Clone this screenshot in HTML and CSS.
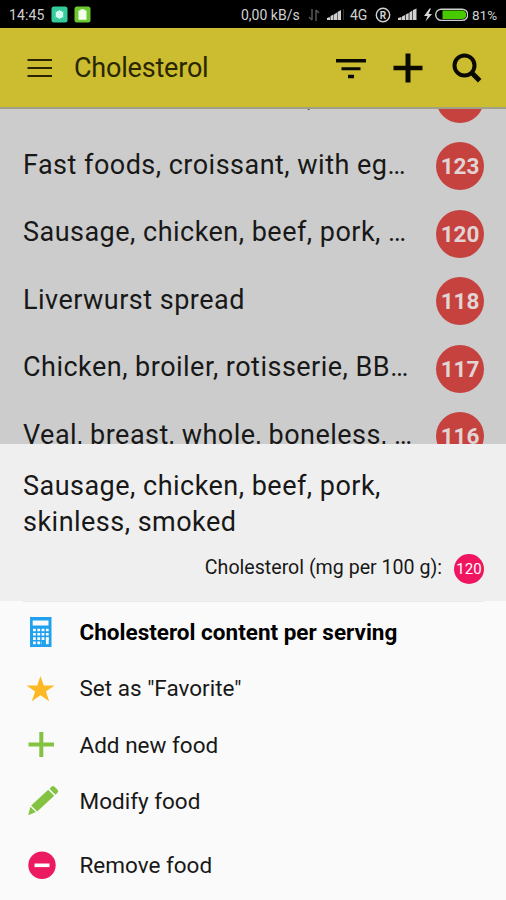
FILE: index.html
```html
<!DOCTYPE html>
<html lang="en">
<head>
    <meta charset="UTF-8">
    <meta name="viewport" content="width=device-width, initial-scale=1.0">
    <title>Cholesterol</title>
    <link rel="stylesheet" href="styles.css">
</head>
<body>

    <!-- Status bar -->
    <div class="status-bar">
        <span class="clock">14:45</span>
        <svg class="app-icon" width="17" height="17" viewBox="0 0 17 17">
            <rect x="0.5" y="0.5" width="16" height="16" rx="2.5" fill="#35cb9b"/>
            <circle cx="8.5" cy="8.5" r="3.8" fill="#d9fff2"/>
            <path d="M4.500 6l8 5M4.500 11l8-5M8.500 4v9" stroke="#c9f9e8" stroke-width="1"/>
        </svg>
        <svg class="app-icon" width="17" height="17" viewBox="0 0 17 17">
            <rect x="0.5" y="0.5" width="16" height="16" rx="2.5" fill="#6cc832"/>
            <path d="M4.500 4.500h2v-1.200h4v1.200h2v9.200h-8z" fill="#f4ffe9"/>
        </svg>
        <div class="status-right">
            <span class="speed">0,00 kB/s</span>
            <svg width="12" height="14" viewBox="0 0 12 14" fill="none" stroke="#555" stroke-width="1.5">
                <path d="M4 1v11M4 12L1 9M8 13V2M8 2l3 3"/>
            </svg>
            <svg class="signal" width="18" height="13" viewBox="0 0 18 13" fill="#d0d0d0">
                <path d="M0 12v-2l3-1v3zM3.500 12V8l3-1.500v5.500zM7 12V6.500l3-2v7.500zM10.500 12V4l3.500-2v10z"/>
                <path d="M16 12V1h1v11z" fill="#333"/>
            </svg>
            <span class="net">4G</span>
            <svg class="roaming" width="16" height="16" viewBox="0 0 16 16">
                <circle cx="8" cy="8" r="6.7" fill="none" stroke="#d0d0d0" stroke-width="1.4"/>
                <text x="8" y="11.5" text-anchor="middle" class="roaming-text">R</text>
            </svg>
            <svg class="signal-full" width="19" height="13" viewBox="0 0 19 13" fill="#d0d0d0">
                <path d="M0 12v-2l3.500-1v3zM4 12V8.500l3-1.500v5zM7.700 12V6.500l3-1.500v7zM11.400 12V4.500l3-2v9.500zM15 12V2l3.500-1.500V12z"/>
            </svg>
            <svg class="battery" width="44" height="14" viewBox="0 0 44 14">
                <path d="M5.500 0.500L0 8h3.500L1.500 13.500L8 6H4.500L7 0.500z" fill="#d8d8d8"/>
                <rect x="11.700" y="1.200" width="32" height="11.200" rx="5.600" fill="none" stroke="#cfcfcf" stroke-width="1.4"/>
                <path d="M18.500 2.500H38a4.300 4.300 0 0 1 0 8.600H18.500z" fill="#47cb00"/>
            </svg>
            <span class="percent">81%</span>
        </div>
    </div>

    <!-- Toolbar -->
    <div class="toolbar">
        <svg class="menu-icon" width="26" height="20" viewBox="0 0 26 20" stroke="#2a2600" stroke-width="2.2">
            <path d="M0.500 2h24.500M0.500 10h24.500M0.500 18h24.500"/>
        </svg>
        <h1>Cholesterol</h1>
        <div class="actions">
            <svg width="32" height="32" viewBox="0 0 32 32" fill="#0a0a00">
                <path d="M1 7h30v3.500H1zM6.500 15.300h19V18.300H6.500zM13 22.800h6v3.500h-6z"/>
            </svg>
            <svg width="32" height="32" viewBox="0 0 32 32" fill="#0a0a00">
                <path d="M13.500 1.500h5v12.300h12v4.400h-12v12.300h-5V18.200H1.500v-4.400h12z"/>
            </svg>
            <svg width="32" height="32" viewBox="0 0 32 32" fill="none" stroke="#0a0a00">
                <circle cx="13.500" cy="13.500" r="10" stroke-width="4"/>
                <path d="M20 20.500l3 2.500" stroke-width="3.5"/>
                <path d="M21.700 21.700l7 7" stroke-width="5"/>
            </svg>
        </div>
    </div>

    <!-- Food list -->
    <div class="food-list">
        <div class="food"><span class="food-name scrolled">,</span><span class="badge">125</span></div>
        <div class="food"><span class="food-name">Fast foods, croissant, with eg…</span><span class="badge">123</span></div>
        <div class="food"><span class="food-name">Sausage, chicken, beef, pork, …</span><span class="badge">120</span></div>
        <div class="food"><span class="food-name">Liverwurst spread</span><span class="badge">118</span></div>
        <div class="food"><span class="food-name">Chicken, broiler, rotisserie, BB…</span><span class="badge">117</span></div>
        <div class="food"><span class="food-name">Veal, breast, whole, boneless, …</span><span class="badge">116</span></div>
    </div>

    <!-- Bottom sheet -->
    <div class="sheet">
        <div class="sheet-header">
            <h2>Sausage, chicken, beef, pork,<br>skinless, smoked</h2>
            <div class="amount">
                <span class="amount-label">Cholesterol (mg per 100 g):</span>
                <span class="badge-small">120</span>
            </div>
        </div>
        <ul class="menu">
            <li class="main">
                <svg width="36" height="34" viewBox="0 0 36 34">
                    <path d="M7 2h21.500v30H7z" fill="#20a1ee"/>
                    <path d="M9.700 5.500h15.800v5H9.700z" fill="#fafafa"/>
                    <path d="M10 15h16M10 19.300h16M10 23.600h16M10 27.900h9" stroke="#fafafa" stroke-width="2.6" stroke-dasharray="2.8 1.5"/>
                    <path d="M22.900 22.500h2.800v6.700h-2.800z" fill="#fafafa"/>
                </svg>
                <span>Cholesterol content per serving</span>
            </li>
            <li>
                <svg width="36" height="34" viewBox="0 0 36 34">
                    <path d="M17.500 5l3.300 9.400h10.700l-8.600 6.100 3.300 9.700-8.700-6-8.700 6 3.300-9.700-8.600-6.100h10.700z" fill="#fdb924"/>
                </svg>
                <span>Set as "Favorite"</span>
            </li>
            <li>
                <svg width="36" height="34" viewBox="0 0 36 34">
                    <path d="M18.300 4v25M5.500 16.500h25.500" stroke="#84c341" stroke-width="4"/>
                </svg>
                <span>Add new food</span>
            </li>
            <li>
                <svg width="36" height="34" viewBox="0 0 36 34" fill="#84c341">
                    <path d="M26.500 4.800l2-2q1.500-1.500 3 0l3 3q1.500 1.500 0 3l-2 2z"/>
                    <path d="M25.200 5.800l6 6-17 15.700-6-6z"/>
                    <path d="M7.300 22.800l5.500 5.200-7.500 3.200z"/>
                </svg>
                <span>Modify food</span>
            </li>
            <li class="remove">
                <svg width="36" height="34" viewBox="0 0 36 34">
                    <circle cx="19" cy="17.300" r="13.700" fill="#ec1a60"/>
                    <path d="M11.500 17.300h15" stroke="#fff" stroke-width="3.6"/>
                </svg>
                <span>Remove food</span>
            </li>
        </ul>
    </div>

</body>
</html>
```
FILE: styles.css
```css
* {
    margin: 0;
    padding: 0;
    box-sizing: border-box;
}

body {
    width: 506px;
    height: 900px;
    display: flex;
    flex-direction: column;
    overflow: hidden;
    background: #fafafa;
    color: #181818;
    font-family: Roboto, sans-serif;
}

svg {
    display: block;
    flex-shrink: 0;
}

/* Status bar */
.status-bar {
    flex: none;
    height: 28px;
    display: flex;
    align-items: center;
    padding: 1px 8px 0 9px;
    background: #000;
    color: #d0d0d0;
    font-size: 14px;
}

.clock {
    width: 42px;
    letter-spacing: 0.1px;
}

.app-icon {
    margin-right: 6px;
}

.status-right {
    margin-left: auto;
    display: flex;
    align-items: center;
}

.speed {
    width: 67px;
    white-space: nowrap;
}

.signal {
    margin-left: 7px;
}

.net {
    width: 25px;
    margin-left: 5px;
}

.roaming-text {
    font-size: 10px;
    font-weight: bold;
    fill: #d0d0d0;
}

.signal-full {
    margin-left: 7px;
}

.battery {
    margin: 0 4px 0 7px;
}

.percent {
    width: 26px;
    font-size: 13.5px;
}

/* Toolbar */
.toolbar {
    flex: none;
    height: 81px;
    display: flex;
    align-items: center;
    padding: 0 23px 0 27px;
    background: #cbbc30;
    border-bottom: 2px solid #a19f85;
}

.toolbar h1 {
    margin-left: 21px;
    font-size: 27px;
    font-weight: normal;
    letter-spacing: -0.2px;
    color: #2a2600;
}

.actions {
    margin-left: auto;
    display: flex;
    gap: 25px;
}

.actions svg:last-child {
    margin-left: 2px;
}

/* Food list, dimmed behind the sheet */
.food-list {
    flex: none;
    height: 334.5px;
    overflow: hidden;
    background: #ccc;
}

.food {
    height: 67.5px;
    display: flex;
    align-items: center;
    justify-content: space-between;
    padding: 0 22px 0 23px;
}

.food:first-child {
    margin-top: -44px;
}

.food-name {
    padding-bottom: 3px;
    font-size: 27px;
    letter-spacing: 0.48px;
    white-space: nowrap;
}

.food-name.scrolled {
    padding-left: 284px;
}

.badge {
    width: 48px;
    height: 48px;
    display: flex;
    align-items: center;
    justify-content: center;
    border-radius: 50%;
    background: #c6423f;
    color: #e0d4d4;
    font-size: 22.5px;
    font-weight: bold;
}

/* Bottom sheet */
.sheet-header {
    height: 157.5px;
    padding: 24px 22px 0 23px;
    background: #efefef;
}

.sheet-header h2 {
    font-size: 27px;
    font-weight: normal;
    line-height: 36.5px;
    letter-spacing: 0.48px;
}

.amount {
    display: flex;
    align-items: center;
    justify-content: flex-end;
    gap: 12px;
    margin-top: 13px;
    font-size: 19.6px;
}

.amount-label {
    padding-bottom: 3px;
}

.badge-small {
    width: 30px;
    height: 30px;
    display: flex;
    align-items: center;
    justify-content: center;
    border-radius: 50%;
    background: #ef1560;
    color: #fff;
    font-size: 15px;
}

.menu {
    margin: 0 22px 0 23px;
    padding-top: 2px;
    border-top: 1px solid #eaeaea;
    list-style: none;
}

.menu li {
    height: 56.3px;
    display: flex;
    align-items: center;
    gap: 20.5px;
    font-size: 22.5px;
}

.menu .main {
    font-weight: bold;
    color: #000;
}

.menu .remove {
    margin-top: 8px;
}
```
